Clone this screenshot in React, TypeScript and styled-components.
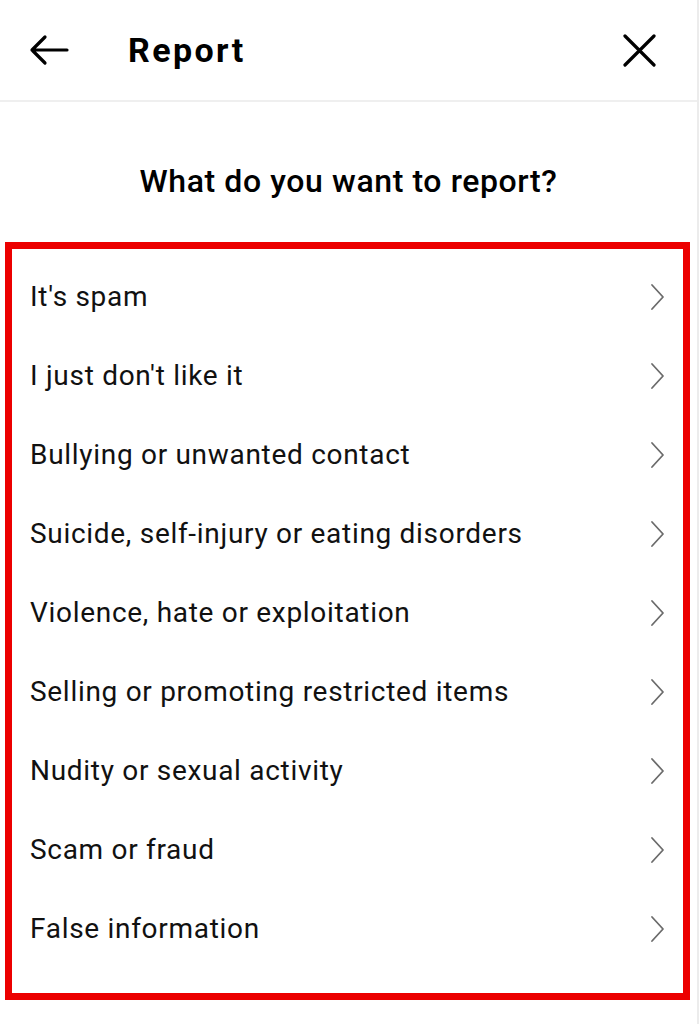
import styled, { createGlobalStyle } from "styled-components";

const Global = createGlobalStyle`
  html, body {
    margin: 0;
    padding: 0;
    background: #ffffff;
  }
  * { box-sizing: border-box; }
`;

const Page = styled.div`
  width: 699px;
  min-height: 1024px;
  background: #fff;
  border-right: 2px solid #ececec;
  font-family: Roboto, "Noto Sans", sans-serif;
  color: #000;
`;

const Header = styled.header`
  height: 102px;
  display: flex;
  align-items: center;
  padding: 0 41px 0 29px;
  border-bottom: 2px solid #efefef;
`;

const IconButton = styled.button`
  border: none;
  background: none;
  padding: 0;
  display: flex;
  align-items: center;
  justify-content: center;
  cursor: pointer;
  color: #000;
`;

const Title = styled.h1`
  margin: 0 0 0 59px;
  flex: 1;
  font-size: 34px;
  font-weight: 700;
  letter-spacing: 2.4px;
`;

const Question = styled.h2`
  margin: 0;
  padding: 60px 0 42px;
  text-align: center;
  font-size: 32px;
  font-weight: 500;
  line-height: 38px;
  letter-spacing: 0.6px;
`;

const Highlight = styled.div`
  margin-left: 5px;
  width: 685px;
  border: 7px solid #ec0000;
  padding: 8px 0 25px;
`;

const Row = styled.div`
  height: 79px;
  display: flex;
  align-items: center;
  justify-content: space-between;
  padding: 0 18px 0 18px;
  font-size: 28px;
  letter-spacing: 0.7px;
  color: #111;
`;

const Chevron = () => (
  <svg width="15" height="28" viewBox="0 0 15 28" fill="none">
    <path d="M2 2 L13 14 L2 26" stroke="#6b6b6b" strokeWidth="1.8" strokeLinecap="round" strokeLinejoin="round" />
  </svg>
);

const items = [
  "It's spam",
  "I just don't like it",
  "Bullying or unwanted contact",
  "Suicide, self-injury or eating disorders",
  "Violence, hate or exploitation",
  "Selling or promoting restricted items",
  "Nudity or sexual activity",
  "Scam or fraud",
  "False information",
];

export default function App() {
  return (
    <Page>
      <Global />
      <Header>
        <IconButton aria-label="Back">
          <svg width="40" height="32" viewBox="0 0 40 32" fill="none">
            <path d="M38 16 H3 M16 3 L3 16 L16 29" stroke="#000" strokeWidth="3.2" strokeLinecap="round" strokeLinejoin="round" />
          </svg>
        </IconButton>
        <Title>Report</Title>
        <IconButton aria-label="Close">
          <svg width="33" height="33" viewBox="0 0 33 33" fill="none">
            <path d="M2 2 L31 31 M31 2 L2 31" stroke="#000" strokeWidth="3.2" strokeLinecap="round" />
          </svg>
        </IconButton>
      </Header>
      <Question>What do you want to report?</Question>
      <Highlight>
        {items.map((t) => (
          <Row key={t}>
            <span>{t}</span>
            <Chevron />
          </Row>
        ))}
      </Highlight>
    </Page>
  );
}
